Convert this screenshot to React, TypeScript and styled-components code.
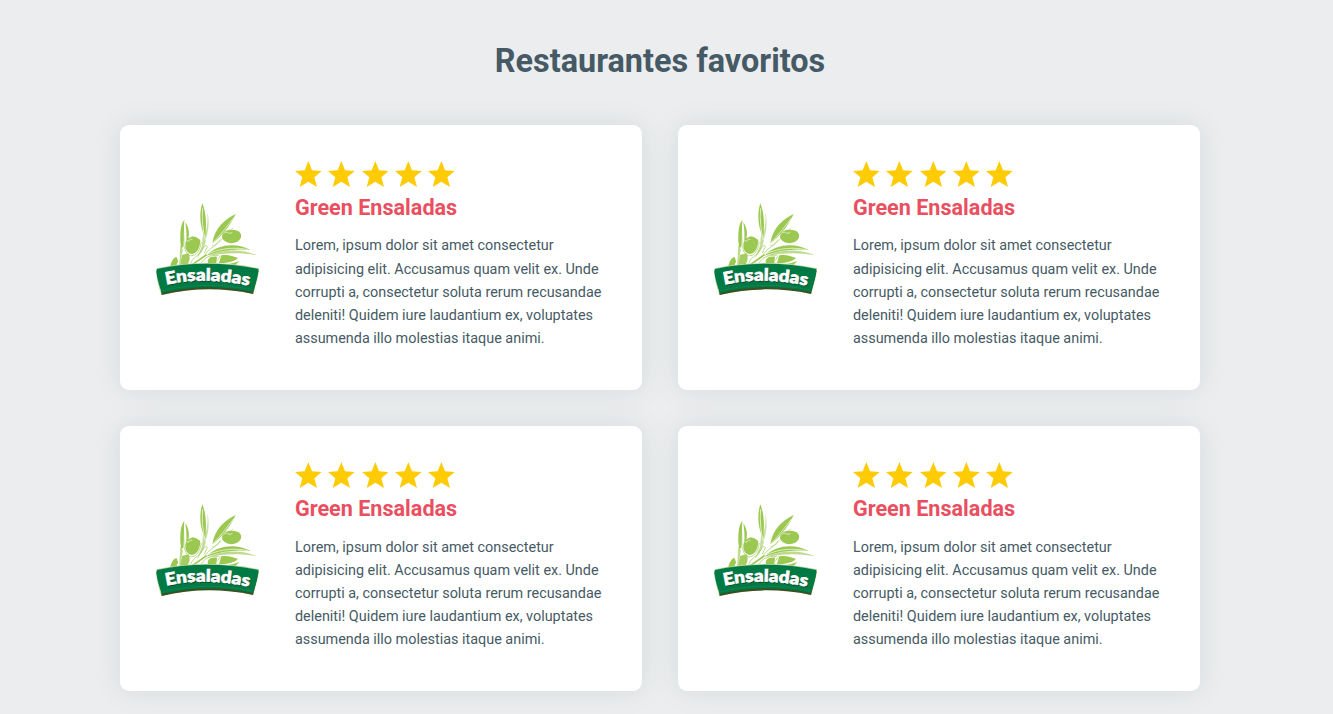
import React from "react";
import styled, { createGlobalStyle } from "styled-components";

const GlobalStyle = createGlobalStyle`
  *, *::before, *::after { box-sizing: border-box; margin: 0; padding: 0; }
  html { font-size: 14.4px; }
  body {
    background: #ecedef;
    color: #455a64;
    font-family: Roboto, "Liberation Sans", sans-serif;
    line-height: 1.6;
    overflow: hidden;
  }
`;

const Section = styled.section`
  width: 1320px;
  height: 714px;
  padding: 35px 120px 0;
`;

const Heading = styled.h2`
  height: 52px;
  margin-bottom: 38px;
  font-size: 32.4px;
  font-weight: 700;
  line-height: 52px;
  text-align: center;
`;

const Grid = styled.div`
  display: grid;
  grid-template-columns: 1fr 1fr;
  gap: 36px;
`;

const Card = styled.article`
  display: flex;
  align-items: center;
  gap: 36px;
  height: 265.2px;
  padding: 36px;
  border-radius: 9px;
  background: #fff;
  box-shadow: 0 0 28px rgba(50, 105, 100, 0.12);
`;

const LogoImage = styled.svg`
  display: block;
  flex: none;
  width: 103px;
  height: 93px;
  margin-top: -17px;
`;

const Content = styled.div`
  flex: 1;
  align-self: stretch;
`;

const Stars = styled.div`
  display: flex;
  gap: 6.6px;
  height: 29.6px;
`;

const StarIcon = styled.svg`
  display: block;
  width: 26.7px;
  height: 26.7px;
`;

const Name = styled.h3`
  color: #e94f5f;
  font-size: 21.6px;
  font-weight: 700;
  line-height: 34.56px;
  margin-bottom: 9.32px;
`;

const Description = styled.p`
  font-size: 14.4px;
  line-height: 23.04px;
`;

const Star = () => (
  <StarIcon viewBox="0 0 80 80">
    <path d="M40 0 L51 28 L80 30 L58 49 L66 78 L40 62 L14 78 L22 49 L0 30 L29 28 Z" fill="#ffcb05" />
  </StarIcon>
);

const Logo = ({ id }: { id: string }) => (
  <LogoImage viewBox="18 23 309 279" role="img" aria-label="Ensaladas">
    <g fill="#9bc850">
      <path d="M157 24 C147 55 149 92 165 126 C170 93 169 52 157 24Z" />
      <path d="M168 130 C176 108 179 78 172 50 C174 75 172 98 165 114Z" opacity=".55" />
      <path d="M103 73 C88 91 90 129 94 160 L103 150 C106 125 100 105 103 73Z" />
      <path d="M106 80 C119 101 118 117 115 131 L108 142 C111 122 109 103 106 80Z" />
      <path d="M93 118 C87 142 91 156 100 163 L93 187 L92 213 L87 213 C90 181 90 160 93 118Z" opacity=".65" />
      <path d="M106 151 C106 130 120 127 128 123 L139 126 L151 134 C151 157 140 175 126 176 C113 174 106 164 106 151Z" />
      <path d="M156 151 C158 132 158 115 163 103 C173 126 166 151 156 168 L140 190 L147 172Z" opacity=".6" />
      <path d="M257 56 C223 73 194 97 187 144 C215 122 240 93 257 56Z" />
      <path d="M216 125 C217 108 232 101 254 104 C270 106 277 117 272 129 C259 151 222 147 216 125Z" />
      <path d="M170 181 C201 145 263 142 301 164 C256 159 214 164 170 181Z" />
      <path d="M174 182 C219 161 276 160 321 180 C271 170 223 172 174 182Z" opacity=".65" />
      <path d="M61 213 C64 196 72 186 80 185 L84 198 L79 211Z" />
      <path d="M91 208 C94 193 94 181 97 178 L116 174 C122 187 118 200 112 208Z" opacity=".9" />
      <path d="M174 204 C170 191 180 182 201 184 L199 204Z" />
      <path d="M207 203 L214 180 C230 176 250 182 264 188 C252 199 234 204 207 203Z" />
      <path d="M226 207 C243 205 258 202 268 196 L257 209Z" />
    </g>
    <g fill="none" stroke="#fff" strokeWidth="2">
      <path d="M158 38 C155 72 158 104 166 134" />
      <path d="M104 91 C102 118 105 143 98 176" />
      <path d="M110 134 C113 145 120 129 127 132" />
      <path d="M190 141 C214 116 235 88 251 67" />
      <path d="M221 115 C229 103 236 120 247 111" />
      <path d="M175 175 C214 158 257 155 293 163" />
    </g>
    <g fill="none" stroke="#9bc850" strokeWidth="2">
      <path d="M102 151 C106 169 113 183 126 181 C143 180 151 159 154 140" />
      <path d="M122 204 C130 184 143 182 151 172 C162 151 170 147 172 154 L163 173" />
      <path d="M128 207 L170 178" strokeWidth="5" />
      <path d="M186 151 C209 151 224 116 250 97" opacity=".65" />
      <path d="M165 178 C180 156 198 154 211 132" />
      <path d="M154 203 C164 184 180 180 207 180 M211 181 L202 195" />
    </g>
    <path d="M20 219 C116 198 230 198 327 219 C326 247 315 276 310 296 C218 275 126 276 34 299 C27 278 20 251 18 229Z" fill="#b8d69b" />
    <path d="M26 228 C121 203 224 203 326 226 L309 296 C218 277 126 277 35 299Z" fill="#38511f" />
    <path d="M21 221 C116 200 230 200 325 221 C324 248 314 273 308 290 C218 270 126 271 36 293 C28 273 21 248 19 229Z" fill="#007a45" />
    <path d="M38 286 C126 265 218 265 306 284" fill="none" stroke="#36a36f" strokeWidth="1.5" strokeDasharray="3 3" />
    <defs>
      <path id={id} d="M49 268 Q168 242 299 272" />
    </defs>
    <text
      fontFamily="Lato, sans-serif"
      fontSize="50"
      fontWeight="900"
      fill="#123e24"
      stroke="#123e24"
      strokeWidth="1"
      transform="translate(2 3)"
      aria-hidden="true"
    >
      <textPath href={`#${id}`} textLength="250" lengthAdjust="spacingAndGlyphs">Ensaladas</textPath>
    </text>
    <text
      fontFamily="Lato, sans-serif"
      fontSize="50"
      fontWeight="900"
      fill="#fff"
      stroke="#fff"
      strokeWidth="2"
    >
      <textPath href={`#${id}`} textLength="250" lengthAdjust="spacingAndGlyphs">Ensaladas</textPath>
    </text>
  </LogoImage>
);

const restaurants = [1, 2, 3, 4].map((id) => ({
  id,
  name: "Green Ensaladas",
  rating: 5,
  description:
    "Lorem, ipsum dolor sit amet consectetur adipisicing elit. Accusamus quam velit ex. Unde corrupti a, consectetur soluta rerum recusandae deleniti! Quidem iure laudantium ex, voluptates assumenda illo molestias itaque animi.",
}));

export default function App() {
  return (
    <>
      <GlobalStyle />
      <Section>
        <Heading>Restaurantes favoritos</Heading>
        <Grid>
          {restaurants.map((r) => (
            <Card key={r.id}>
              <Logo id={`banner-${r.id}`} />
              <Content>
                <Stars>
                  {Array.from({ length: r.rating }, (_, i) => (
                    <Star key={i} />
                  ))}
                </Stars>
                <Name>{r.name}</Name>
                <Description>{r.description}</Description>
              </Content>
            </Card>
          ))}
        </Grid>
      </Section>
    </>
  );
}
